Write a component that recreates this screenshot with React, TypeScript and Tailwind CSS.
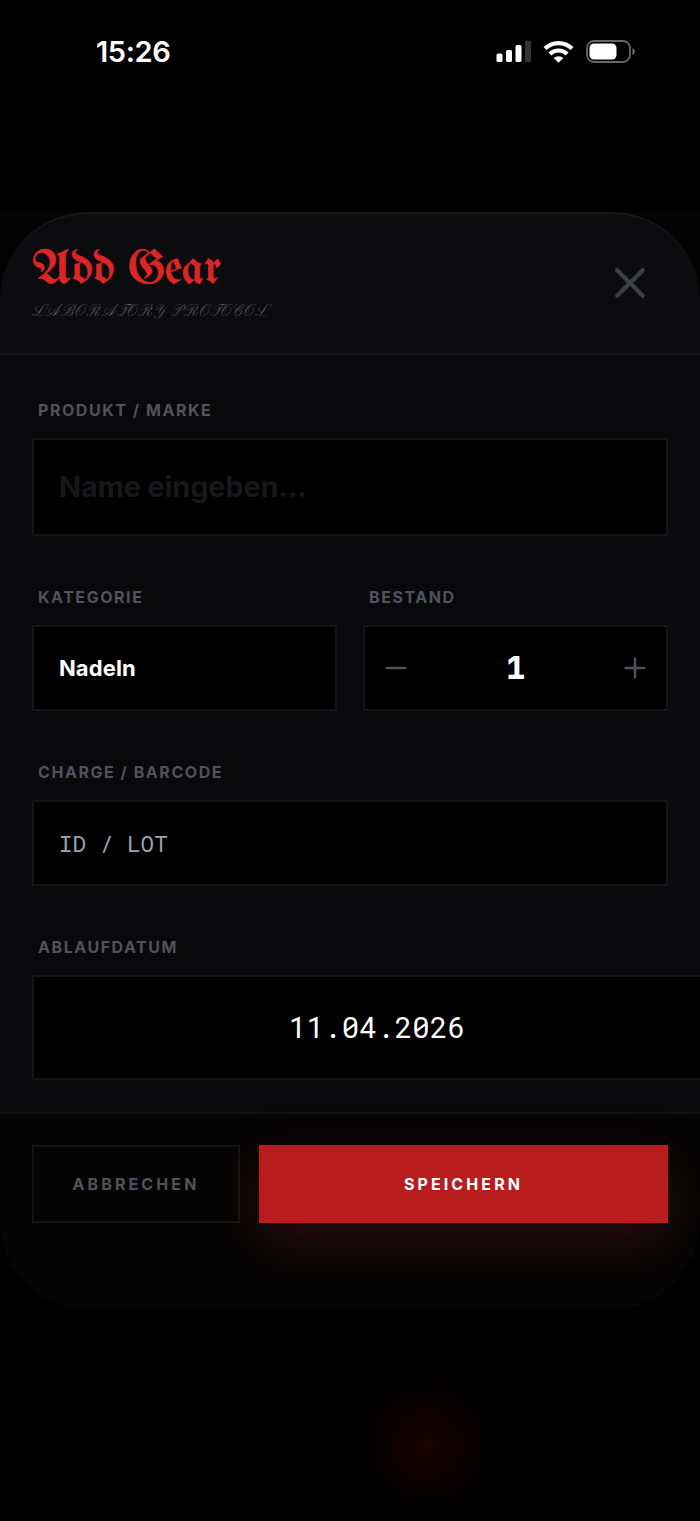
import React from 'react';
import { X, Minus, Plus } from 'lucide-react';
import clsx from 'clsx';

const StatusBar = () => (
  <header className="flex h-[212px] items-start justify-between bg-black pl-[96px] pr-[65px] pt-[34px]">
    <span className="text-[29px] leading-9 font-semibold tracking-[-0.4px] text-white">15:26</span>
    <div className="flex h-[34px] items-center gap-[11px]">
      <svg width="36" height="22" viewBox="0 0 36 22" fill="#fff">
        <rect x="0.5" y="13.5" width="6" height="8.5" rx="1.6" />
        <rect x="10" y="10" width="6" height="12" rx="1.6" />
        <rect x="19.5" y="5" width="6" height="17" rx="1.6" />
        <rect x="29" y="0.5" width="6" height="21.5" rx="1.6" fill="#333" />
      </svg>
      <svg width="32" height="23" viewBox="0 0 32 23" fill="none" stroke="#fff" strokeWidth="4.2">
        <path d="M2 8.5a19.5 19.5 0 0 1 27 0" />
        <path d="M6.9 14a12.3 12.3 0 0 1 17.2 0" />
        <path d="M10.7 18.1a7 7 0 0 1 9.6 0L15.5 22.8z" fill="#fff" stroke="none" />
      </svg>
      <svg width="49" height="23" viewBox="0 0 49 23">
        <rect x="1" y="1" width="43" height="21" rx="7" fill="none" stroke="#666" strokeWidth="1.8" />
        <rect x="3.5" y="3.5" width="27" height="16" rx="4.5" fill="#fff" />
        <path d="M46.5 8.2c3 1 3 5.6 0 6.6z" fill="#777" />
      </svg>
    </div>
  </header>
);

interface FieldProps {
  label: string;
  className?: string;
  boxClassName?: string;
  children: React.ReactNode;
}

const Field = ({ label, className, boxClassName, children }: FieldProps) => (
  <div className={clsx('flex flex-col gap-[18px]', className)}>
    <span className="pl-1.5 text-[16px] leading-5 font-bold tracking-[1.55px] text-[#52525b]">{label}</span>
    <div className={clsx('flex items-center border-2 border-[#151517] bg-black', boxClassName)}>
      {children}
    </div>
  </div>
);

const App = () => {
  return (
    <div className="relative h-[1521px] w-[700px] overflow-hidden bg-black font-['Inter',sans-serif]">
      {/* glow of the tab bar action behind the overlay */}
      <div className="absolute left-[358px] top-[1376px] h-[138px] w-[138px] bg-[radial-gradient(closest-side,#160303_0%,#120202_40%,#070101_70%,#000_100%)]" />
      <StatusBar />

      <div className="bg-[linear-gradient(#050505,#000_100px)]">
        <section className="flex h-[1097px] flex-col overflow-hidden rounded-[88px] bg-[#09090b]">
          <div className="flex h-[143px] shrink-0 justify-between rounded-t-[88px] border-t-2 border-b-2 border-t-[#19191b] border-b-[#151517] bg-[#0c0c0e] pl-8 pr-[50px]">
            <div className="flex flex-col pt-[30px]">
              <h1 className="font-['UnifrakturMaguntia','Liberation_Serif',serif] text-[48px] leading-[52px] font-normal tracking-[-0.2px] text-[#dc2626] [-webkit-text-stroke:0.5px_#dc2626]">
                Add Gear
              </h1>
              <p className="font-['Pinyon_Script','Liberation_Serif',serif] text-[16px] leading-8 tracking-[2px] text-[#5a5a60]">
                LABORATORY PROTOCOL
              </p>
            </div>
            <X className="mt-[49px] h-10 w-10 scale-[1.28] text-[#3f3f46]" strokeWidth={2} />
          </div>

          <div className="flex h-[757px] shrink-0 flex-col gap-[51px] px-8 pt-[45px]">
            <Field label="PRODUKT / MARKE" boxClassName="h-[98px] px-[25px]">
              <span className="text-[29px] font-bold tracking-[-0.2px] text-[#18181b]">Name eingeben...</span>
            </Field>
            <div className="grid grid-cols-2 gap-[26px]">
              <Field label="KATEGORIE" boxClassName="h-[86px] px-[25px]">
                <span className="text-[22px] font-bold tracking-[0.1px] text-white">Nadeln</span>
              </Field>
              <Field label="BESTAND" boxClassName="h-[86px] justify-between px-[15px]">
                <Minus className="size-8 text-[#52525b]" strokeWidth={1.8} />
                <span className="font-['JetBrains_Mono','DejaVu_Sans_Mono',monospace] text-[32px] font-extrabold text-white">1</span>
                <Plus className="size-8 text-[#52525b]" strokeWidth={1.8} />
              </Field>
            </div>
            <Field label="CHARGE / BARCODE" boxClassName="h-[86px] px-[25px]">
              <span className="pt-0.5 font-['Roboto_Mono','Liberation_Mono',monospace] text-[22.5px] tracking-[0.1px] text-[#9ca3af]">ID / LOT</span>
            </Field>
            <Field label="ABLAUFDATUM" className="w-[690px]" boxClassName="h-[105px] justify-center">
              <span className="font-['Roboto_Mono','DejaVu_Sans_Mono',monospace] text-[29px] tracking-[0.25px] text-white">11.04.2026</span>
            </Field>
          </div>

          <footer className="flex flex-1 items-start gap-[19px] border-t-2 border-[#151517] bg-[#050505] px-8 pt-[31px]">
            <button className="h-[78px] w-[208px] border-2 border-[#151517] text-[16px] font-bold tracking-[3.1px] text-[#52525b]">
              ABBRECHEN
            </button>
            <button className="h-[78px] flex-1 bg-[#b91c1c] text-[16px] font-bold tracking-[3.1px] text-white shadow-[0_18px_54px_rgba(127,29,29,0.3)]">
              SPEICHERN
            </button>
          </footer>
        </section>
      </div>
    </div>
  );
};

export default App;
